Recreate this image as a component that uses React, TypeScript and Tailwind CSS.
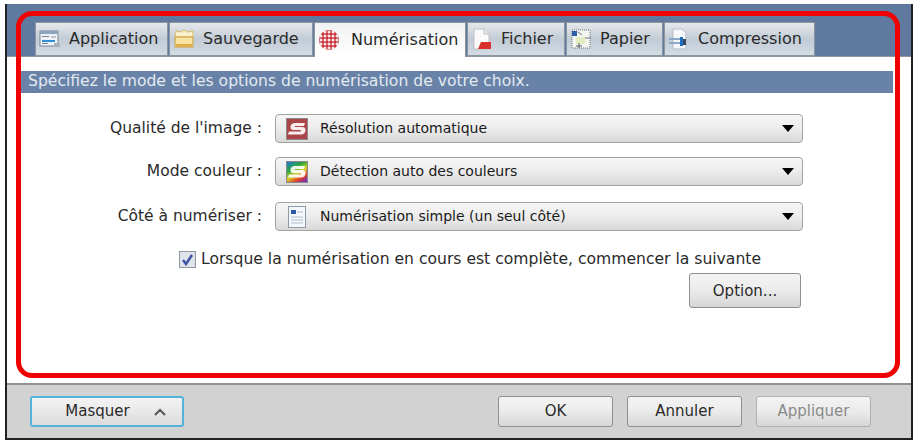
import type { ReactNode } from "react";

const IconApplication = () => (
  <svg width="22" height="20" viewBox="0 0 22 20">
    <rect x="1" y="2" width="18" height="15" fill="#eef2f6" stroke="#7c8794" />
    <rect x="1" y="2" width="18" height="3" fill="#8da4bf" />
    <rect x="3" y="7" width="7" height="1" fill="#7c8794" />
    <rect x="12" y="7" width="5" height="2" fill="#b9c4d0" />
    <path d="M3 11h13v2H3z" fill="#2f8fd8" />
    <rect x="3" y="14" width="6" height="1" fill="#7c8794" />
    <rect x="15" y="14" width="6" height="4" fill="#a9b0b8" />
  </svg>
);

const IconSauvegarde = () => (
  <svg width="22" height="20" viewBox="0 0 22 20">
    <path d="M2 8l1-6 5 1 3-2 4 2 5-1 0 6z" fill="#f8f0cf" stroke="#d8bb68" />
    <path d="M2 8h18v10H2z" fill="#f7e3a4" stroke="#c79a3d" />
    <rect x="3" y="15" width="16" height="3" fill="#e0ad48" />
  </svg>
);

const IconNumerisation = () => (
  <svg width="22" height="22" viewBox="0 0 22 22">
    <circle cx="11" cy="11" r="10" fill="#c9303c" />
    {[3, 7, 11, 15, 19].flatMap((y) =>
      [3, 7, 11, 15, 19].map((x) =>
        (x - 11) ** 2 + (y - 11) ** 2 < 90 ? <circle key={`${x}-${y}`} cx={x} cy={y} r="1.500" fill="#fde8e8" /> : null,
      ),
    )}
  </svg>
);

const IconFichier = () => (
  <svg width="22" height="22" viewBox="0 0 22 22">
    <path d="M3 1h10l5 5v15H3z" fill="#fafafa" stroke="#c0c0c0" />
    <path d="M13 1v5h5" fill="#e8e8e8" stroke="#c0c0c0" />
    <path d="M7 21l3-7h10v7z" fill="#d9302c" />
  </svg>
);

const IconPapier = () => (
  <svg width="22" height="22" viewBox="0 0 22 22">
    <rect x="2" y="2" width="18" height="18" fill="#f3f6ee" stroke="#6d7580" strokeDasharray="1 1" />
    <rect x="2" y="3" width="5" height="5" fill="#2a5ea8" />
    <path d="M8 4l4 3M15 10h6" stroke="#6b7480" />
    <path d="M6 9h9v7H6z" fill="#e4edc0" />
    <path d="M9 15v5M6 18h6" stroke="#4f5a66" />
  </svg>
);

const IconCompression = () => (
  <svg width="22" height="22" viewBox="0 0 22 22">
    <path d="M5 1h9l4 4v16H5z" fill="#f6f8fb" stroke="#b4bcc6" />
    <rect x="1" y="10" width="11" height="2" fill="#8aa8c8" />
    <rect x="1" y="14" width="11" height="2" fill="#8aa8c8" />
    <rect x="12" y="9" width="3" height="9" fill="#1f6fc0" />
    <rect x="15" y="11" width="3" height="6" fill="#3c4a5c" />
  </svg>
);

const ScanLogo = ({ fill }: { fill: string }) => (
  <svg width="22" height="22" viewBox="0 0 22 22">
    <defs>
      <linearGradient id="rainbow" x1="0.2" y1="0" x2="0.8" y2="1">
        <stop offset="0" stopColor="#1f7fc0" />
        <stop offset="0.3" stopColor="#2fa83a" />
        <stop offset="0.55" stopColor="#d8d42a" />
        <stop offset="0.8" stopColor="#e0402e" />
        <stop offset="1" stopColor="#7a2bb0" />
      </linearGradient>
    </defs>
    <rect x="0.500" y="0.500" width="21" height="21" fill={fill} stroke="#8a8a8a" />
    <path d="M19 5H9Q5 5 4.500 8.500T8 12h6q1.500 0 1 1.500H3l-1 3h13q4 0 4.500-4T15 9H9.500Q8 9 9 8h9z" fill="#fff" opacity="0.9" />
  </svg>
);

const IconSimple = () => (
  <svg width="20" height="22" viewBox="0 0 20 22">
    <rect x="1.500" y="0.500" width="17" height="21" fill="#f4f7fb" stroke="#8e9aa8" />
    <rect x="4" y="4" width="5" height="4" fill="#2c5aa8" />
    <path d="M10 6h6M4 11h12M4 14h12M4 17h12" stroke="#b4bdc9" />
  </svg>
);

const tabs: { label: string; icon: ReactNode; width: string; active?: boolean }[] = [
  { label: "Application", icon: <IconApplication />, width: "w-[133px]" },
  { label: "Sauvegarde", icon: <IconSauvegarde />, width: "w-[144px]" },
  { label: "Numérisation", icon: <IconNumerisation />, width: "w-[152px]", active: true },
  { label: "Fichier", icon: <IconFichier />, width: "w-[98px]" },
  { label: "Papier", icon: <IconPapier />, width: "w-[97px]" },
  { label: "Compression", icon: <IconCompression />, width: "w-[151px]" },
];

function Tab({ label, icon, width, active }: { label: string; icon: ReactNode; width: string; active?: boolean }) {
  return (
    <div
      className={`${width} flex items-center pl-[3px] border-x border-t border-[#8c96a0] ${
        active
          ? "gap-[11px] bg-gradient-to-b from-[#f1f2f3] to-white h-[35px] -mb-px border-b-0"
          : "gap-2 bg-gradient-to-b from-[#e6e8ea] via-[#c2ccd6] via-50% to-[#d3dbe4] h-[34px] border-b"
      }`}
    >
      <span className="shrink-0">{icon}</span>
      <span className="text-[#2a2a2a]">{label}</span>
    </div>
  );
}

function Dropdown({ label, icon, value }: { label: string; icon: ReactNode; value: string }) {
  return (
    <div className="flex items-center h-[29px]">
      <span className="w-[181px] text-right text-[#2a2a2a] text-[15.500px] whitespace-nowrap">{label}</span>
      <div className="ml-[13px] w-[528px] h-[29px] flex items-center pl-[10px] pr-[8px] rounded-[4px] border border-[#a3a39b] bg-gradient-to-b from-[#f6f6f6] via-[#ececec] via-50% to-[#d9d9d9]">
        <span className="w-[22px] flex justify-center">{icon}</span>
        <span className="ml-[12px] flex-1 text-[14px] text-[#1a1a1a]">{value}</span>
        <svg width="12" height="7" viewBox="0 0 12 7">
          <path d="M0 0h12L6 7z" fill="#000" />
        </svg>
      </div>
    </div>
  );
}

function Button({ label, className }: { label: ReactNode; className: string }) {
  return (
    <div
      className={`flex items-center justify-center rounded-[3px] border border-[#8f8f8f] bg-gradient-to-b from-[#f4f4f4] via-[#ebebeb] via-50% to-[#d6d6d6] text-[15px] text-[#2a2a2a] ${className}`}
    >
      {label}
    </div>
  );
}

export default function App() {
  return (
    <div className="relative w-[915px] h-[443px] bg-white pt-1 pl-[5px] pr-[2px] pb-[3px] font-['DejaVu_Sans',Verdana,sans-serif] overflow-hidden">
      <div className="h-full flex flex-col border-x-2 border-b-2 border-x-[#222] border-b-[#222] bg-white">
        {/* tab strip */}
        <div className="h-[53px] shrink-0 flex items-end pl-[28px] gap-px bg-[#5f7a9e] border-b border-[#8c96a0] text-[16px]">
          {tabs.map((t) => (
            <Tab key={t.label} label={t.label} icon={t.icon} width={t.width} active={t.active} />
          ))}
        </div>

        <div className="flex-1 flex flex-col pt-[14px] pl-[14px] pr-[18px]">
          <div className="h-[22px] flex items-center pl-[7px] bg-[#6983a8] text-[#e4eaf1] text-[15.600px] whitespace-nowrap">
            Spécifiez le mode et les options de numérisation de votre choix.
          </div>

          <div className="flex flex-col pt-[21px] pl-[60px]">
            <Dropdown label="Qualité de l'image :" icon={<ScanLogo fill="#ab4548" />} value="Résolution automatique" />
            <div className="mt-[14px]">
              <Dropdown label="Mode couleur :" icon={<ScanLogo fill="url(#rainbow)" />} value="Détection auto des couleurs" />
            </div>
            <div className="mt-[16px]">
              <Dropdown label="Côté à numériser :" icon={<IconSimple />} value="Numérisation simple (un seul côté)" />
            </div>
            <div className="mt-[17px] ml-[98px] flex items-center text-[15.600px] text-[#2a2a2a] whitespace-nowrap">
              <span className="w-[17px] h-[17px] flex items-center justify-center border border-[#8f96a0] bg-[#dfe3ea]">
                <svg width="13" height="13" viewBox="0 0 13 13">
                  <path d="M2 7l3 4 6-9" fill="none" stroke="#3f55a8" strokeWidth="2.500" />
                </svg>
              </span>
              <span className="ml-[5px]">Lorsque la numérisation en cours est complète, commencer la suivante</span>
            </div>
            <div className="flex pl-[608px] mt-[2px]">
              <Button label="Option..." className="w-[112px] h-[35px]" />
            </div>
          </div>
        </div>

        {/* footer */}
        <div className="h-[55px] shrink-0 flex items-center pl-[23px] bg-[#d2d2d2] border-t-2 border-[#909090]">
          <div className="w-[154px] h-[31px] flex items-center justify-center gap-[24px] pl-[17px] rounded-[3px] border-2 border-[#52b4d8] bg-gradient-to-b from-[#f4f4f4] to-[#dcdcdc] text-[15px] text-[#2a2a2a]">
            <span>Masquer</span>
            <svg width="12" height="8" viewBox="0 0 12 8">
              <path d="M1 7l5-5 5 5" fill="none" stroke="#555" strokeWidth="2" />
            </svg>
          </div>
          <div className="ml-auto flex gap-[14px] pr-[40px]">
            <Button label="OK" className="w-[115px] h-[31px]" />
            <Button label="Annuler" className="w-[115px] h-[31px]" />
            <Button label={<span className="text-[#8a8a8a]">Appliquer</span>} className="w-[115px] h-[31px] border-[#b0b0b0]" />
          </div>
        </div>
      </div>

      {/* red annotation frame */}
      <div className="absolute left-[16px] top-[11px] w-[884px] h-[367px] rounded-[16px] border-[5px] border-[#f00000]" />
    </div>
  );
}
